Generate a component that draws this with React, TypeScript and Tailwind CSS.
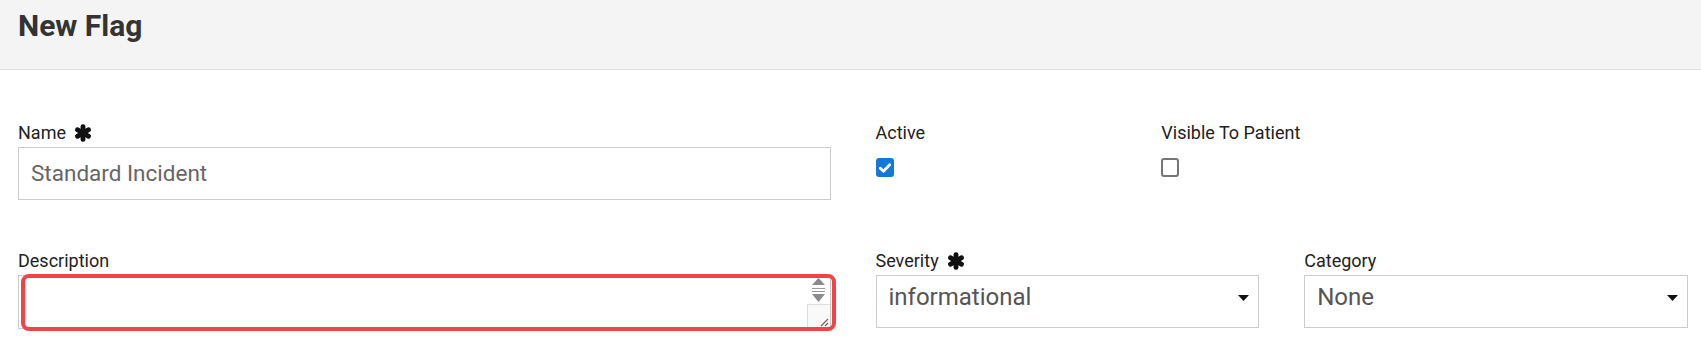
import React from 'react';

const font = { fontFamily: 'Roboto, "Liberation Sans", Arial, sans-serif' };

const Asterisk: React.FC = () => (
  <svg viewBox="0 0 20 20" className="ml-[7px] h-[18px] w-[20px] shrink-0" aria-hidden="true">
    <g fill="#111">
      <rect x="7.3" y="0.2" width="5.4" height="19.6" rx="2.5" />
      <rect x="7.3" y="0.2" width="5.4" height="19.6" rx="2.5" transform="rotate(60 10 10)" />
      <rect x="7.3" y="0.2" width="5.4" height="19.6" rx="2.5" transform="rotate(-60 10 10)" />
    </g>
  </svg>
);

const Label: React.FC<{ text: string; required?: boolean }> = ({ text, required }) => (
  <div className="mb-[4px] flex h-[20px] items-center text-[18px] leading-[20px] text-[#222]">
    <span>{text}</span>
    {required && <Asterisk />}
  </div>
);

const Caret: React.FC = () => (
  <svg viewBox="0 0 11 6" className="mt-[19px] mr-[9px] h-[6px] w-[11px] shrink-0" aria-hidden="true">
    <path d="M0 0 L11 0 L5.5 6 Z" fill="#111" />
  </svg>
);

const SelectBox: React.FC<{ value: string }> = ({ value }) => (
  <div className="flex h-[53px] items-start justify-between border border-[#cccccc] bg-white">
    <span className="pt-[7px] pl-[12px] text-[24px] leading-[28px] text-[#555]">{value}</span>
    <Caret />
  </div>
);

const Checkbox: React.FC<{ checked?: boolean }> = ({ checked }) =>
  checked ? (
    <div className="mt-[15px] flex h-[19px] w-[18px] items-center justify-center rounded-[3px] bg-[#1478d4]">
      <svg viewBox="0 0 12 10" className="h-[10px] w-[12px]" aria-hidden="true">
        <path d="M1.3 5.3 L4.5 8.3 L10.7 1.7" fill="none" stroke="#fff" strokeWidth="2.8" strokeLinecap="round" strokeLinejoin="round" />
      </svg>
    </div>
  ) : (
    <div className="mt-[15px] h-[19px] w-[18px] rounded-[3px] border-2 border-[#767676] bg-white" />
  );

const TextareaScroll: React.FC = () => (
  <div className="flex w-[23px] shrink-0 flex-col">
    <div className="flex h-[28px] items-start justify-center pt-[2px]">
      <svg viewBox="0 0 13 25" className="h-[25px] w-[13px]" aria-hidden="true">
        <path d="M6.5 0 L13 7 L0 7 Z" fill="#8a8a8a" />
        <rect x="0" y="10" width="13" height="1" fill="#9a9a9a" />
        <rect x="0" y="13" width="13" height="1" fill="#9a9a9a" />
        <path d="M0 16 L13 16 L6.5 24 Z" fill="#8a8a8a" />
      </svg>
    </div>
    <div className="flex flex-1 items-end justify-end border-t border-l border-[#dedede] bg-[#f9f9f9]">
      <svg viewBox="0 0 10 10" className="mr-[1px] mb-[1px] h-[10px] w-[10px]" aria-hidden="true">
        <path d="M9 2 L2 9 M9 6 L6 9" stroke="#666" strokeWidth="1.2" fill="none" />
      </svg>
    </div>
  </div>
);

export default function App() {
  return (
    <div className="min-h-[346px] w-full bg-white" style={font}>
      <div className="h-[70px] border-b border-[#dddddd] bg-[#f4f4f4] pt-[8px] pl-[18px]">
        <h1 className="text-[30px] font-bold leading-[36px] text-[#333]">New Flag</h1>
      </div>

      <div className="grid grid-cols-12 gap-x-[45px] gap-y-[51px] pt-[53px] pr-[13px] pl-[18px]">
        <div className="col-span-6">
          <Label text="Name" required />
          <div className="flex h-[53px] items-center border border-[#cccccc] bg-white pl-[12px] text-[22.5px] text-[#666]">
            Standard Incident
          </div>
        </div>
        <div className="col-span-2">
          <Label text="Active" />
          <Checkbox checked />
        </div>
        <div className="col-span-2">
          <Label text="Visible To Patient" />
          <Checkbox />
        </div>
        <div className="col-span-2" />

        <div className="col-span-6">
          <Label text="Description" />
          <div className="relative">
            <div className="flex h-[54px] justify-end border border-[#cccccc] bg-white">
              <TextareaScroll />
            </div>
            <div className="pointer-events-none absolute top-[-1px] right-[-5px] bottom-[-2px] left-[3px] rounded-[8px] border-[4px] border-[#f24446]" />
          </div>
        </div>
        <div className="col-span-3">
          <Label text="Severity" required />
          <SelectBox value="informational" />
        </div>
        <div className="col-span-3">
          <Label text="Category" />
          <SelectBox value="None" />
        </div>
      </div>
    </div>
  );
}
